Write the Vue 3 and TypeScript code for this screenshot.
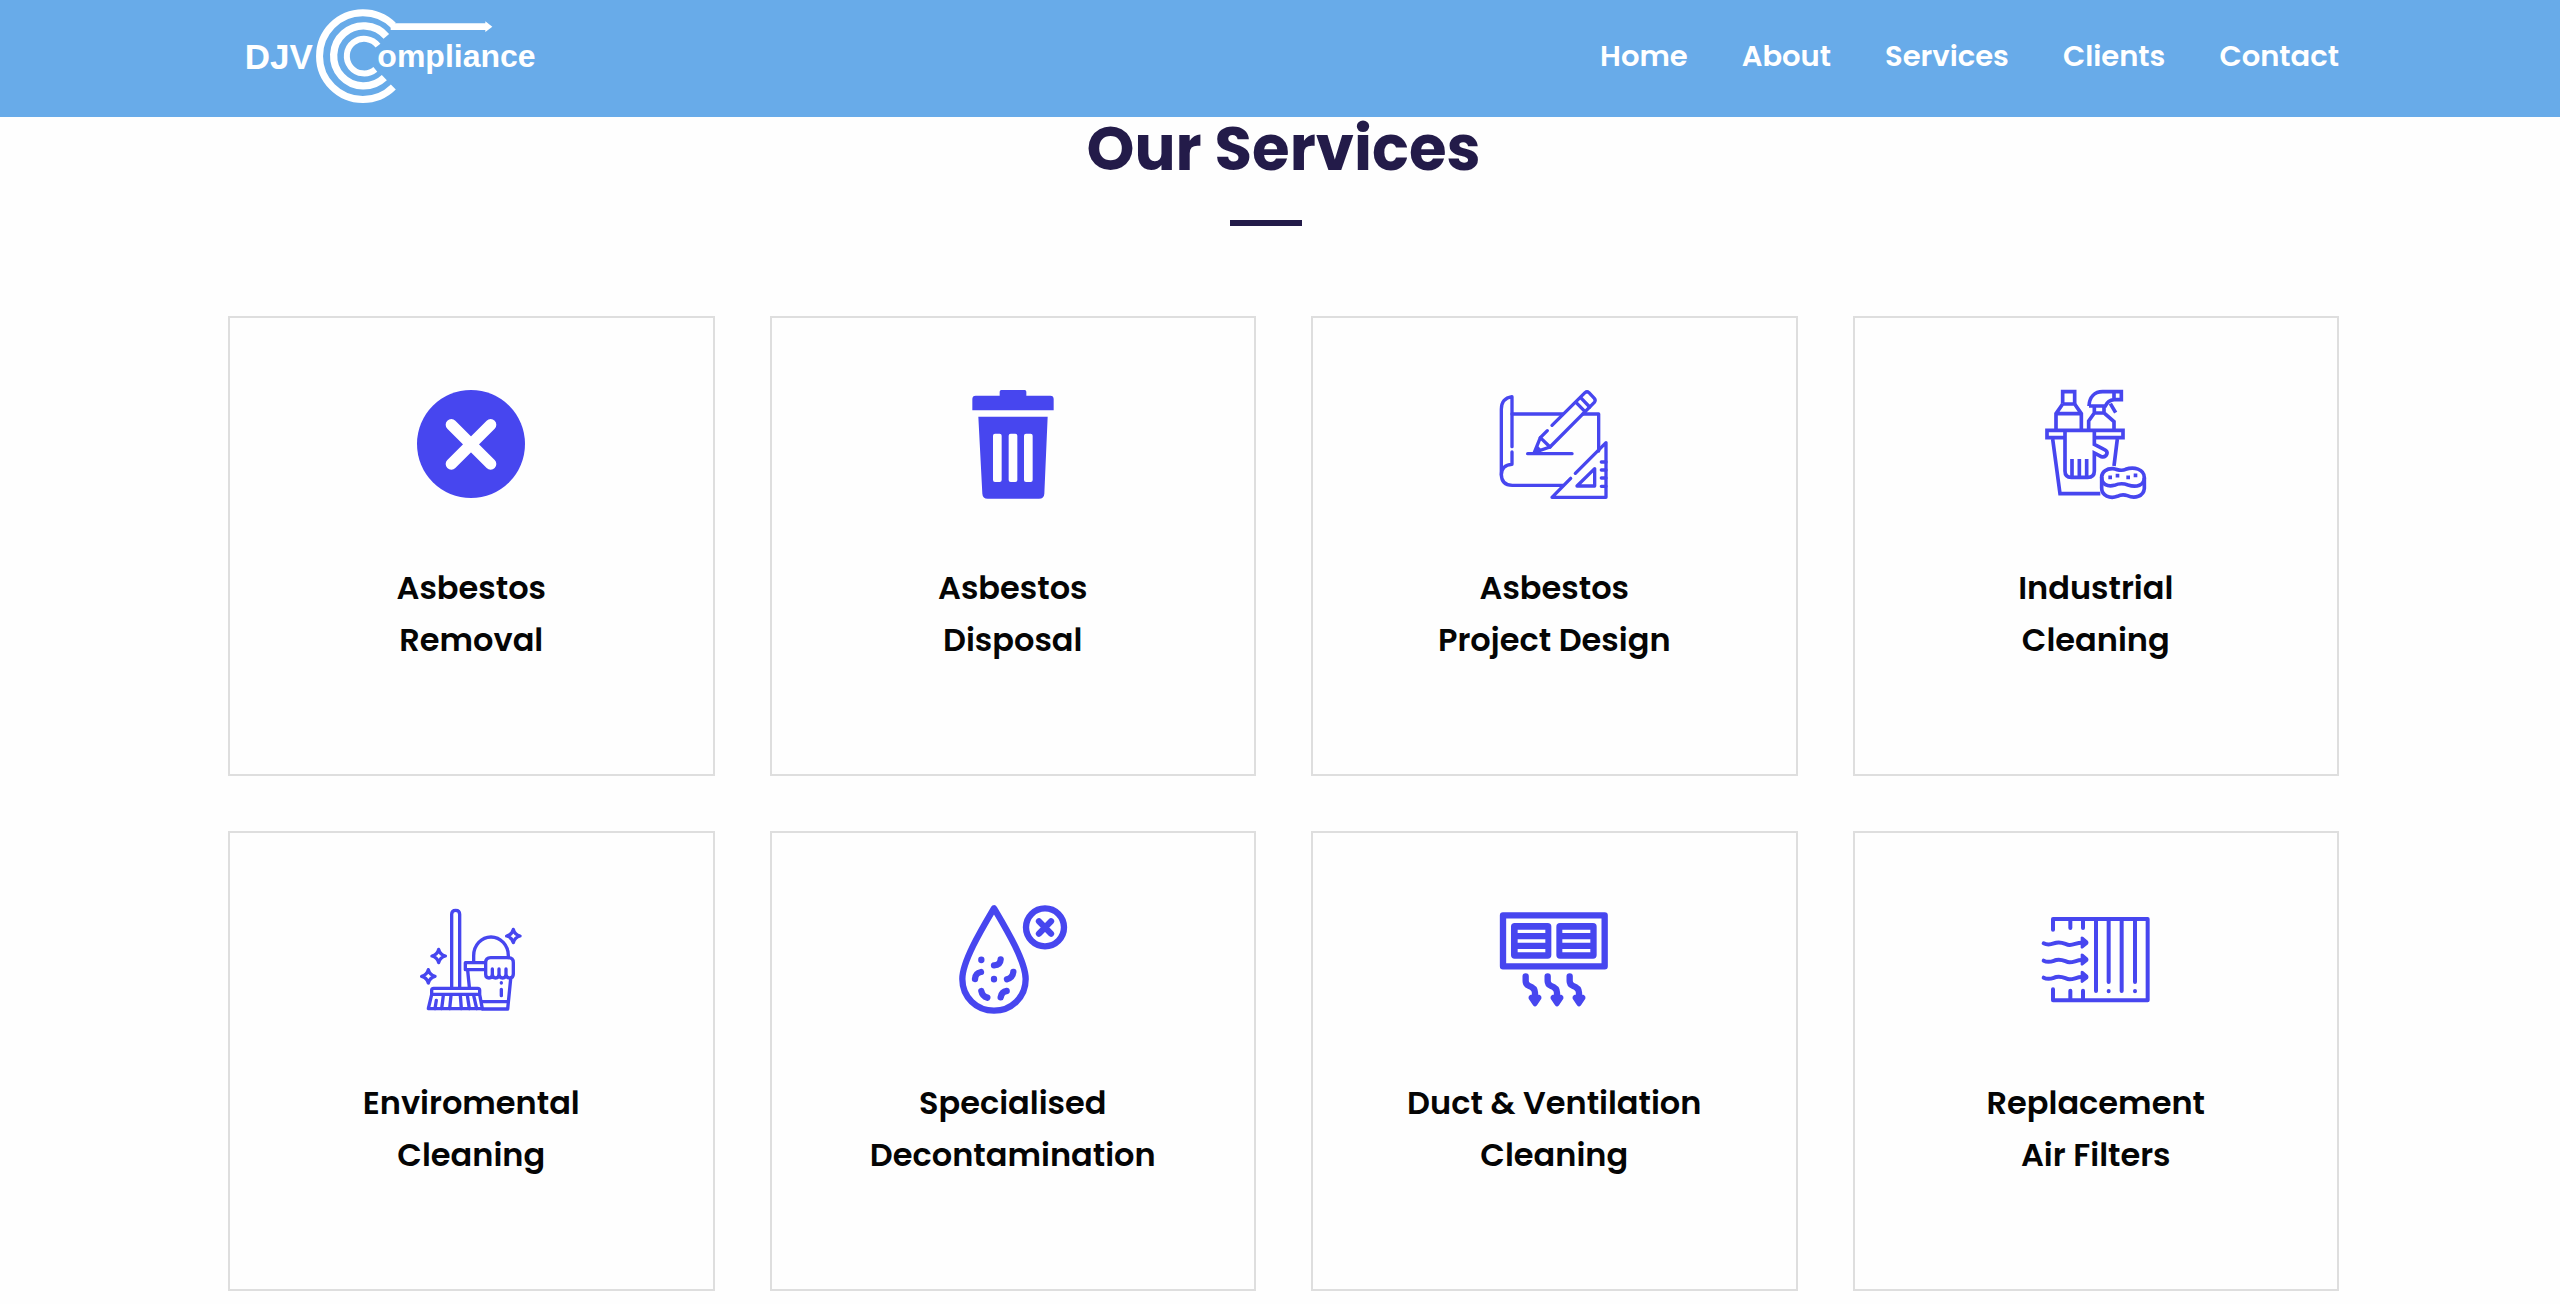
<script setup lang="ts">
type IconName = 'remove' | 'trash' | 'blueprint' | 'bucket' | 'broom' | 'drop' | 'duct' | 'filter'

interface NavLink {
  label: string
  href: string
}

interface Service {
  icon: IconName
  viewBox: string
  lines: [string, string]
}

const links: NavLink[] = [
  { label: 'Home', href: '#home' },
  { label: 'About', href: '#about' },
  { label: 'Services', href: '#services' },
  { label: 'Clients', href: '#clients' },
  { label: 'Contact', href: '#contact' },
]

const services: Service[] = [
  { icon: 'remove', viewBox: '0 0 324 324', lines: ['Asbestos', 'Removal'] },
  { icon: 'trash', viewBox: '27 57 324 324', lines: ['Asbestos', 'Disposal'] },
  { icon: 'blueprint', viewBox: '62 57 324 324', lines: ['Asbestos', 'Project Design'] },
  { icon: 'bucket', viewBox: '65 57 324 324', lines: ['Industrial', 'Cleaning'] },
  { icon: 'broom', viewBox: '54 42 324 324', lines: ['Enviromental', 'Cleaning'] },
  { icon: 'drop', viewBox: '57 42 324 324', lines: ['Specialised', 'Decontamination'] },
  { icon: 'duct', viewBox: '61 42 324 324', lines: ['Duct & Ventilation', 'Cleaning'] },
  { icon: 'filter', viewBox: '65 42 324 324', lines: ['Replacement', 'Air Filters'] },
]
</script>

<template>
  <header class="header">
    <a class="logo" href="#home" aria-label="DJV Compliance">
      <svg viewBox="75 24 873 288" fill="none" stroke="#fff">
        <path d="M520 76A130 130 0 1 0 520 261" stroke-width="21" />
        <path d="M499 109A90 90 0 1 0 493 233" stroke-width="22" />
        <path d="M474 137A52 52 0 1 0 466 208" stroke-width="18" />
        <path d="M512 80H802" stroke-width="20" />
        <path d="M796 64L817 80L796 96Z" fill="#fff" stroke="none" />
        <text class="logo-djv" x="74" y="206">DJV</text>
        <text class="logo-name" x="472" y="201">ompliance</text>
      </svg>
    </a>
    <nav class="nav">
      <a v-for="link in links" :key="link.label" :href="link.href">{{ link.label }}</a>
    </nav>
  </header>

  <main class="services">
    <h2 class="title">Our Services</h2>
    <div class="rule"></div>

    <div class="grid">
      <article v-for="service in services" :key="service.icon" class="card">
        <svg class="icon" :viewBox="service.viewBox" aria-hidden="true">
          <template v-if="service.icon === 'remove'">
            <circle class="solid" cx="162" cy="162" r="162" />
            <path d="M103 104L221 222M221 104L103 222" stroke="#fff" stroke-width="34" />
          </template>

          <template v-else-if="service.icon === 'trash'">
            <path class="solid" d="M67 118V84Q67 74 77 74H149V62Q149 57 154 57H224Q229 57 229 62V74H301Q311 74 311 84V118Z" />
            <path class="solid" fill-rule="evenodd" d="M85 137H293L283 368Q282 383 267 383H113Q98 383 97 368ZM135 188Q129 188 129 194V327Q129 333 135 333H149Q155 333 155 327V194Q155 188 149 188ZM182 188Q176 188 176 194V327Q176 333 182 333H196Q202 333 202 327V194Q202 188 196 188ZM228 188Q222 188 222 194V327Q222 333 228 333H242Q248 333 248 327V194Q248 188 242 188Z" />
          </template>

          <g v-else-if="service.icon === 'blueprint'" stroke-width="10">
            <path d="M98 227V77Q66 82 66 115V310Q66 343 99 343H251" />
            <path d="M98 243V280Q66 282 66 312" />
            <path d="M98 129H250M311 129H358V240" />
            <path d="M145 248H278" />
            <path d="M218 163L317 65Q323 60 329 65L345 82Q350 88 345 94L212 228L165 244L183 200L204 179" />
            <path d="M183 200L212 228M290 94L317 122M304 80L331 108" />
            <path class="solid" d="M165 246L173 222L188 237Z" />
            <path d="M288 307L380 215V379H218L274 322" />
            <path d="M346 293V345H293Z" />
            <path d="M366 273H380M366 297H380M366 321H380M366 346H380" />
          </g>

          <g v-else-if="service.icon === 'bucket'" stroke-width="11" class="square">
            <path d="M127 98V62H163V98" />
            <path d="M127 99H163L183 128V174M127 99L107 128V174M107 128H183" />
            <path d="M206 105C207 78 223 62 247 62H303V86H281Q263 88 255 105H206M281 64V86" />
            <path d="M222 108V126L205 150V174M251 108V126L281 152V174M222 126H251M270 98L286 125" />
            <path d="M134 200H80V178H308V200H222" />
            <path d="M97 204L119 368H240M291 204L281 285" />
            <path d="M134 180V300Q134 319 153 319H202Q222 319 222 300V246L243 257Q256 260 260 248Q262 240 251 235L222 220V180" />
            <path d="M155 264V318M177 264V318M199 264V318" />
            <path fill="#fff" d="M244 318C244 302 260 292 278 293C295 296 302 302 316 295C340 286 372 294 372 320V352C370 377 343 383 321 374C308 369 301 371 291 376C269 384 244 374 244 352Z" />
            <path d="M244 318C244 341 262 348 282 343C298 336 310 337 323 342C349 351 372 342 372 320" />
            <path d="M264 319H275M286 314H297M318 319H329M340 313H351" />
          </g>

          <g v-else-if="service.icon === 'broom'" stroke-width="10">
            <path d="M158 288V70Q158 58 170 58Q182 58 182 70V288" />
            <path d="M104 292H236Q242 292 242 298V310H98V298Q98 292 104 292ZM98 311L88 353H250L242 311" />
            <path d="M112 328L108 353M133 313L128 353M156 313L152 353M184 313L187 353M205 313L211 353M224 313L233 353" />
            <path d="M224 213V194A52 56 0 0 1 328 194V200" />
            <path d="M258 215H199V236H258M206 238L211 288M335 264L326 354H250M248 332H326" />
            <path d="M260 250V215Q260 200 275 200H328Q343 200 343 215V249Q343 261 332 261Q321 261 321 250Q321 261 311 261Q300 261 300 250Q300 261 290 261Q280 261 280 250Q280 261 270 261Q260 261 260 250M280 250V234M300 250V234M321 250V234" />
            <path d="M307 295V314M307 275V276" />
            <path d="M343 115Q347 131 363 135Q347 139 343 155Q339 139 323 135Q339 131 343 115ZM119 175Q123 191 139 195Q123 199 119 215Q115 199 99 195Q115 191 119 175ZM88 236Q92 252 108 256Q92 260 88 276Q84 260 68 256Q84 252 88 236Z" />
          </g>

          <g v-else-if="service.icon === 'drop'" stroke-width="19">
            <path d="M162 52C126 113 67 211 67 264C67 319 110 359 162 359C214 359 257 319 257 264C257 211 198 113 162 52Z" />
            <circle cx="315" cy="109" r="57" />
            <path d="M297 91L333 128M333 91L297 128" />
            <path d="M182 205Q181 222 162 223M105 264Q106 246 123 243M220 243Q218 260 201 265M124 300Q127 316 142 320M200 300Q185 302 182 319" />
            <path d="M124 206V207M162 264V265" />
          </g>

          <g v-else-if="service.icon === 'duct'">
            <rect x="70" y="73" width="305" height="153" stroke-width="19" />
            <rect class="solid" x="94" y="96" width="121" height="107" rx="11" />
            <rect class="solid" x="230" y="96" width="121" height="107" rx="11" />
            <path class="slots" d="M114 121H197M114 150H197M114 179H197M248 121H332M248 150H332M248 179H332" />
            <path d="M138 256V270Q138 280 147 284Q166 290 166 305V330M204 256V270Q204 280 213 284Q232 290 232 305V330M270 256V270Q270 280 279 284Q298 290 298 305V330" stroke-width="19" />
            <path class="solid" d="M153 311H179Q187 314 185 323L172 343Q166 350 160 343L147 323Q145 314 153 311ZM219 311H245Q253 314 251 323L238 343Q232 350 226 343L213 323Q211 314 219 311ZM285 311H311Q319 314 317 323L304 343Q298 350 292 343L279 323Q277 314 285 311Z" />
          </g>

          <g v-else stroke-width="12">
            <path d="M98 116V84H382V328H98V295M150 88V111M188 88V111M150 324V299M188 324V299" />
            <path d="M227 88V300M265 88V273M304 88V300M344 88V273M265 300V301M344 300V301" />
            <path d="M70 157C87 166 98 157 108 155C126 151 136 161 147 162C159 163 169 155 184 155M70 209C87 218 98 209 108 207C126 203 136 213 147 214C159 215 169 207 184 207M70 260C87 269 98 260 108 258C126 254 136 264 147 265C159 266 169 258 184 258" />
            <path class="solid" d="M181 139Q184 134 189 138L203 150Q206 155 203 160L189 171Q184 175 181 170ZM181 190Q184 185 189 189L203 201Q206 206 203 211L189 222Q184 226 181 221ZM181 242Q184 237 189 241L203 253Q206 258 203 263L189 274Q184 278 181 273Z" />
          </g>
        </svg>
        <h3 class="name">{{ service.lines[0] }}<br />{{ service.lines[1] }}</h3>
      </article>
    </div>
  </main>
</template>

<style>
body {
  margin: 0;
  background: #fefefe;
  font-family: Poppins, Inter, sans-serif;
}
</style>

<style scoped>
.header {
  position: sticky;
  top: 0;
  z-index: 1;
  display: flex;
  align-items: center;
  justify-content: space-between;
  padding: 8px 221px 13px 245px;
  background: #68abe9;
}

.logo svg {
  display: block;
  width: 291px;
  height: 96px;
}

.logo text {
  fill: #fff;
  stroke: none;
  font-family: "Liberation Sans", Arial, sans-serif;
  font-weight: 700;
}

.logo-djv {
  font-size: 105px;
}

.logo-name {
  font-size: 96px;
}

.nav {
  display: flex;
  gap: 54px;
}

.nav a {
  color: #fff;
  font-size: 29px;
  font-weight: 600;
  line-height: 48px;
  text-decoration: none;
}

.services {
  display: flex;
  flex-direction: column;
  align-items: center;
  padding: 0 221px 13px 228px;
}

.title {
  margin: 0;
  color: #231b49;
  font-size: 61px;
  font-weight: 700;
  line-height: 64px;
}

.rule {
  width: 72px;
  height: 6px;
  margin: 39px 36px 90px 0;
  background: #231b49;
}

.grid {
  display: grid;
  grid-template-columns: repeat(4, 1fr);
  gap: 55px;
  align-self: stretch;
}

.card {
  display: flex;
  flex-direction: column;
  align-items: center;
  padding: 72px 24px 108px;
  border: 2px solid #dedede;
}

.icon {
  width: 108px;
  height: 108px;
  overflow: visible;
  fill: none;
  stroke: #4746ef;
  stroke-linecap: round;
  stroke-linejoin: round;
}

.icon .solid {
  fill: #4746ef;
  stroke: none;
}

.icon .square {
  stroke-linecap: butt;
  stroke-linejoin: miter;
}

.icon .slots {
  stroke: #fff;
  stroke-width: 10px;
  stroke-linecap: butt;
}

.name {
  margin: 64px 0 0;
  color: #050505;
  font-size: 32px;
  font-weight: 600;
  line-height: 52px;
  text-align: center;
}

@media (max-width: 1600px) {
  .header,
  .services {
    padding-left: 40px;
    padding-right: 40px;
  }

  .grid {
    grid-template-columns: repeat(auto-fit, minmax(320px, 1fr));
  }
}
</style>
